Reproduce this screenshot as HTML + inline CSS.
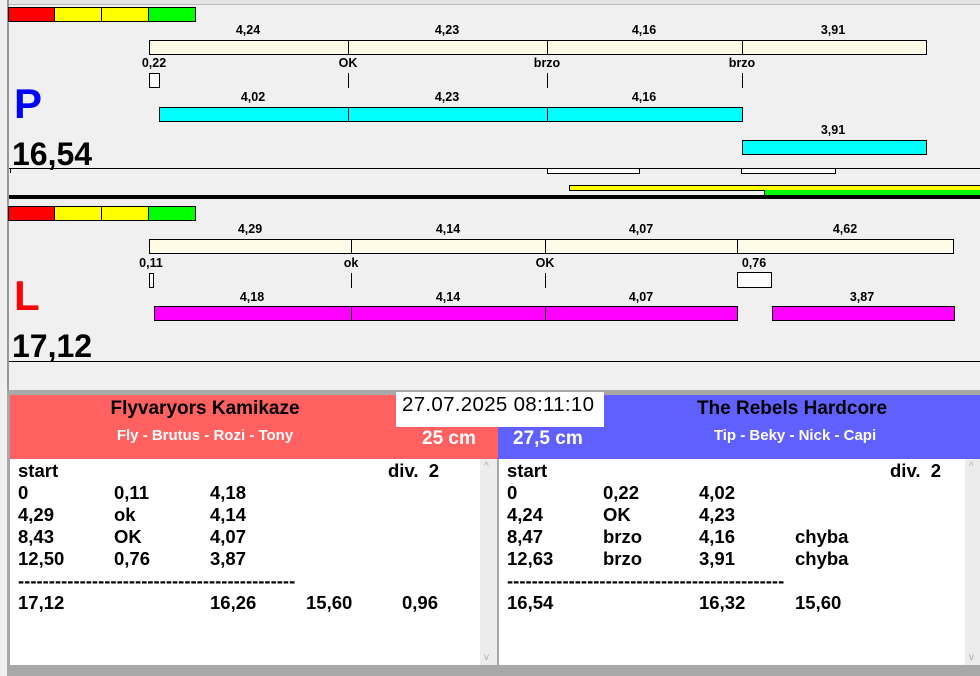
<!DOCTYPE html>
<html><head><meta charset="utf-8"><style>
*{margin:0;padding:0;box-sizing:border-box}
body{width:980px;height:676px;background:#f0f0f0;position:relative;overflow:hidden;font-family:"Liberation Sans",Arial,sans-serif}
div{position:absolute}
.b{border:1px solid #000}
.c{background:#fffbe6}
.cy{background:#00ffff}
.mg{background:#ff00ff}
.l{font-size:12.5px;font-weight:bold;color:#000;transform:translateX(-50%);white-space:nowrap;line-height:14px}
.t{width:1px;background:#000}
.tx{font-size:18.5px;font-weight:bold;line-height:22px;white-space:nowrap}
</style></head><body>
<div style="left:0;top:0;width:980px;height:5px;background:#e4e4e4;border-bottom:1px solid #bbb"></div>
<div style="left:7px;top:0;width:2px;height:392px;background:#999"></div>
<div style="left:0;top:0;width:7px;height:676px;background:#f0f0f0"></div>

<div class="b" style="left:8px;top:7px;width:47px;height:15px;background:#ff0000"></div>
<div class="b" style="left:54px;top:7px;width:48px;height:15px;background:#ffff00"></div>
<div class="b" style="left:101px;top:7px;width:48px;height:15px;background:#ffff00"></div>
<div class="b" style="left:148px;top:7px;width:48px;height:15px;background:#00ff00"></div>

<div class="l" style="left:248px;top:23px">4,24</div>
<div class="l" style="left:447px;top:23px">4,23</div>
<div class="l" style="left:644px;top:23px">4,16</div>
<div class="l" style="left:833px;top:23px">3,91</div>
<div class="b c" style="left:149px;top:40px;width:778px;height:15px"></div>
<div class="t" style="left:348px;top:40px;height:15px"></div>
<div class="t" style="left:547px;top:40px;height:15px"></div>
<div class="t" style="left:742px;top:40px;height:15px"></div>
<div class="l" style="left:154px;top:56px">0,22</div>
<div class="l" style="left:348px;top:56px">OK</div>
<div class="l" style="left:547px;top:56px">brzo</div>
<div class="l" style="left:742px;top:56px">brzo</div>
<div class="b" style="left:149px;top:73px;width:11px;height:15px;background:#fff"></div>
<div class="t" style="left:348px;top:73px;height:15px"></div>
<div class="t" style="left:547px;top:73px;height:15px"></div>
<div class="t" style="left:742px;top:73px;height:15px"></div>

<div style="left:14px;top:80px;font-size:42px;font-weight:bold;color:#0000ff;line-height:48px">P</div>
<div style="left:12px;top:136px;font-size:32px;font-weight:bold;line-height:36px">16,54</div>

<div class="l" style="left:253px;top:90px">4,02</div>
<div class="l" style="left:447px;top:90px">4,23</div>
<div class="l" style="left:644px;top:90px">4,16</div>
<div class="b cy" style="left:159px;top:107px;width:584px;height:15px"></div>
<div class="t" style="left:348px;top:107px;height:15px"></div>
<div class="t" style="left:547px;top:107px;height:15px"></div>
<div class="l" style="left:833px;top:123px">3,91</div>
<div class="b cy" style="left:742px;top:140px;width:185px;height:15px"></div>

<div style="left:9px;top:168px;width:971px;height:1px;background:#000"></div>
<div class="t" style="left:10px;top:168px;height:5px"></div>
<div class="b" style="left:547px;top:168px;width:93px;height:6px;background:#fff"></div>
<div class="b" style="left:741px;top:168px;width:95px;height:6px;background:#fff"></div>
<div class="b" style="left:569px;top:185px;width:420px;height:6px;background:#ffff00"></div>
<div style="left:764px;top:190px;width:216px;height:5px;background:#00ff00;border-left:1px solid #000"></div>
<div style="left:9px;top:195px;width:971px;height:4px;background:#000"></div>

<div class="b" style="left:8px;top:206px;width:47px;height:15px;background:#ff0000"></div>
<div class="b" style="left:54px;top:206px;width:48px;height:15px;background:#ffff00"></div>
<div class="b" style="left:101px;top:206px;width:48px;height:15px;background:#ffff00"></div>
<div class="b" style="left:148px;top:206px;width:48px;height:15px;background:#00ff00"></div>

<div class="l" style="left:250px;top:222px">4,29</div>
<div class="l" style="left:448px;top:222px">4,14</div>
<div class="l" style="left:641px;top:222px">4,07</div>
<div class="l" style="left:845px;top:222px">4,62</div>
<div class="b c" style="left:149px;top:239px;width:805px;height:15px"></div>
<div class="t" style="left:351px;top:239px;height:15px"></div>
<div class="t" style="left:545px;top:239px;height:15px"></div>
<div class="t" style="left:737px;top:239px;height:15px"></div>
<div class="l" style="left:151px;top:256px">0,11</div>
<div class="l" style="left:351px;top:256px">ok</div>
<div class="l" style="left:545px;top:256px">OK</div>
<div class="l" style="left:754px;top:256px">0,76</div>
<div class="b" style="left:149px;top:273px;width:5px;height:15px;background:#fff"></div>
<div class="t" style="left:351px;top:273px;height:15px"></div>
<div class="t" style="left:545px;top:273px;height:15px"></div>
<div class="b" style="left:737px;top:272px;width:35px;height:16px;background:#fff"></div>

<div style="left:14px;top:272px;font-size:42px;font-weight:bold;color:#ff0000;line-height:48px">L</div>
<div style="left:12px;top:328px;font-size:32px;font-weight:bold;line-height:36px">17,12</div>

<div class="l" style="left:252px;top:290px">4,18</div>
<div class="l" style="left:448px;top:290px">4,14</div>
<div class="l" style="left:641px;top:290px">4,07</div>
<div class="l" style="left:862px;top:290px">3,87</div>
<div class="b mg" style="left:154px;top:306px;width:584px;height:15px"></div>
<div class="t" style="left:351px;top:306px;height:15px"></div>
<div class="t" style="left:545px;top:306px;height:15px"></div>
<div class="b mg" style="left:772px;top:306px;width:183px;height:15px"></div>
<div style="left:9px;top:361px;width:971px;height:1px;background:#000"></div>

<div style="left:7px;top:390px;width:973px;height:286px;background:#a8a8a8"></div>
<div style="left:10px;top:395px;width:488px;height:64px;background:#ff6060"></div>
<div style="left:498px;top:395px;width:482px;height:64px;background:#6060ff"></div>
<div style="left:55px;top:397px;width:300px;text-align:center;font-size:19px;font-weight:bold;line-height:24px">Flyvaryors Kamikaze</div>
<div style="left:55px;top:427px;width:300px;text-align:center;font-size:15px;font-weight:bold;color:#fff;line-height:18px">Fly - Brutus - Rozi - Tony</div>
<div style="left:642px;top:397px;width:300px;text-align:center;font-size:19px;font-weight:bold;line-height:24px">The Rebels Hardcore</div>
<div style="left:645px;top:427px;width:300px;text-align:center;font-size:15px;font-weight:bold;color:#fff;line-height:18px">Tip - Beky - Nick - Capi</div>
<div style="left:396px;top:392px;width:208px;height:35px;background:#fff"></div>
<div style="left:396px;top:393px;width:210px;font-size:20.5px;line-height:24px;padding-left:6px;letter-spacing:0.3px">27.07.2025 08:11:10</div>
<div style="left:422px;top:428px;font-size:19px;font-weight:bold;color:#fff;line-height:22px">25 cm</div>
<div style="left:513px;top:428px;font-size:19px;font-weight:bold;color:#fff;line-height:22px">27,5 cm</div>

<div style="left:10px;top:459px;width:470px;height:206px;background:#fff"></div>
<div style="left:480px;top:459px;width:17px;height:206px;background:#ececec;color:#aaa;font-size:10px"><span style="position:absolute;top:2px;left:4px">^</span><span style="position:absolute;bottom:2px;left:4px">v</span></div>
<div style="left:499px;top:459px;width:466px;height:206px;background:#fff"></div>
<div style="left:965px;top:459px;width:15px;height:206px;background:#ececec;color:#aaa;font-size:10px"><span style="position:absolute;top:2px;left:4px">^</span><span style="position:absolute;bottom:2px;left:4px">v</span></div>

<div class="tx" style="left:18px;top:460px">start</div>
<div class="tx" style="left:388px;top:460px">div.&nbsp;&nbsp;2</div>
<div class="tx" style="left:18px;top:482px">0<br>4,29<br>8,43<br>12,50</div>
<div class="tx" style="left:114px;top:482px">0,11<br>ok<br>OK<br>0,76</div>
<div class="tx" style="left:210px;top:482px">4,18<br>4,14<br>4,07<br>3,87</div>
<div class="tx" style="left:18px;top:570px">---------------------------------------------</div>
<div class="tx" style="left:18px;top:592px">17,12</div>
<div class="tx" style="left:210px;top:592px">16,26</div>
<div class="tx" style="left:306px;top:592px">15,60</div>
<div class="tx" style="left:402px;top:592px">0,96</div>

<div class="tx" style="left:507px;top:460px">start</div>
<div class="tx" style="left:890px;top:460px">div.&nbsp;&nbsp;2</div>
<div class="tx" style="left:507px;top:482px">0<br>4,24<br>8,47<br>12,63</div>
<div class="tx" style="left:603px;top:482px">0,22<br>OK<br>brzo<br>brzo</div>
<div class="tx" style="left:699px;top:482px">4,02<br>4,23<br>4,16<br>3,91</div>
<div class="tx" style="left:795px;top:482px"><br><br>chyba<br>chyba</div>
<div class="tx" style="left:507px;top:570px">---------------------------------------------</div>
<div class="tx" style="left:507px;top:592px">16,54</div>
<div class="tx" style="left:699px;top:592px">16,32</div>
<div class="tx" style="left:795px;top:592px">15,60</div>
</body></html>
